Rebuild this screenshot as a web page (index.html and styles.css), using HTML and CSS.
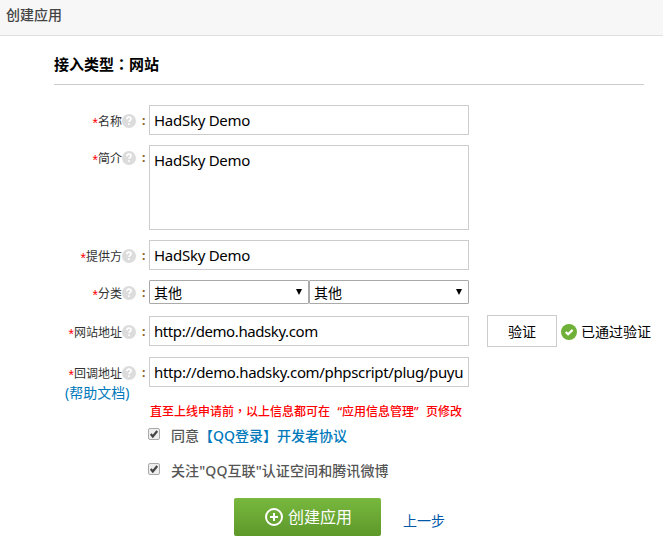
FILE: index.html
```html
<!DOCTYPE html>
<html lang="zh-CN">
<head>
<meta charset="utf-8">
<title>创建应用</title>
<link rel="stylesheet" href="styles.css">
</head>
<body>
<svg class="defs" width="0" height="0">
  <symbol id="help" viewBox="0 0 14 14"><circle cx="7" cy="7" r="7" fill="#dcdcdc"/><path d="M5 5.2C5 3.6 6 3.2 7 3.2S9 3.8 9 5C9 6.4 7 6.4 7 8.1M7 9.3v1.7" fill="none" stroke="#fff" stroke-width="1.7"/></symbol>
  <symbol id="tick" viewBox="0 0 13 13"><path d="M3 6.5l2.2 2.6L10 3.3" fill="none" stroke="#444" stroke-width="2.4"/></symbol>
</svg>
<header class="top">创建应用</header>
<main class="main">
  <h2 class="section">接入类型<span class="mid" lang="zh-TW">：</span>网站</h2>
  <div class="row name">
    <div class="label"><b>*</b><span>名称</span><svg><use href="#help"/></svg><i>:</i></div>
    <div class="field">HadSky Demo</div>
  </div>
  <div class="row intro">
    <div class="label"><b>*</b><span>简介</span><svg><use href="#help"/></svg><i>:</i></div>
    <div class="field area">HadSky Demo</div>
  </div>
  <div class="row vendor">
    <div class="label"><b>*</b><span>提供方</span><svg><use href="#help"/></svg><i>:</i></div>
    <div class="field">HadSky Demo</div>
  </div>
  <div class="row category">
    <div class="label"><b>*</b><span>分类</span><svg><use href="#help"/></svg><i>:</i></div>
    <div class="select"><span>其他</span><em></em></div><div class="select"><span>其他</span><em></em></div>
  </div>
  <div class="row site">
    <div class="label"><b>*</b><span>网站地址</span><svg><use href="#help"/></svg><i>:</i></div>
    <div class="field url">http://demo.hadsky.com</div>
    <div class="verify">验证</div>
    <svg class="ok" viewBox="0 0 16 16"><circle cx="8" cy="8" r="8" fill="#6fb038"/><path d="M4.7 8l2.4 2.3 4.5-4.4" fill="none" stroke="#fff" stroke-width="2.2"/></svg>
    <span class="passed">已通过验证</span>
  </div>
  <div class="row callback">
    <div class="label"><b>*</b><span>回调地址</span><svg><use href="#help"/></svg><i>:</i></div>
    <div class="field url long">http://demo.hadsky.com/phpscript/plug/puyu</div>
  </div>
  <a class="doc">(帮助文档)</a>
  <p class="notice">直至上线申请前<span class="mid" lang="zh-TW">，</span>以上信息都可在<q>“</q>应用信息管理<q class="close">”</q>页修改</p>
  <div class="check"><span class="box"><svg><use href="#tick"/></svg></span><span>同意<a>【QQ登录】开发者协议</a></span></div>
  <div class="check follow"><span class="box"><svg><use href="#tick"/></svg></span><span>关注"QQ互联"认证空间和腾讯微博</span></div>
  <div class="actions">
    <div class="create"><svg viewBox="0 0 18 18"><circle cx="9" cy="9" r="8" fill="none" stroke="#fff" stroke-width="2"/><path d="M9 5v8M5 9h8" stroke="#fff" stroke-width="2"/></svg>创建应用</div>
    <a class="back">上一步</a>
  </div>
</main>
</body>
</html>
```
FILE: styles.css
```css
* { box-sizing: border-box; }
body {
  margin: 0;
  width: 663px;
  height: 556px;
  overflow: hidden;
  background: #fff;
  color: #000;
  font: 14px/20px "Noto Sans", "Noto Sans CJK SC", sans-serif;
}
.defs { display: block; }
.top {
  height: 36px;
  padding: 4px 6px;
  background: #f7f7f7;
  border-bottom: 1px solid #e0e0e0;
  color: #444;
  font-weight: 500;
  font-family: "Noto Sans CJK SC", sans-serif;
}
.section {
  width: 590px;
  height: 49px;
  margin: 0 0 20px 54px;
  padding-top: 18px;
  border-bottom: 1px solid #ccc;
  font: bold 15px/20px "Noto Sans CJK SC", sans-serif;
}
.mid { font-family: "Noto Sans CJK TC", sans-serif; }
.row { display: flex; align-items: flex-start; white-space: nowrap; }
.label {
  display: flex;
  align-items: center;
  justify-content: flex-end;
  width: 149px;
  height: 20px;
  margin-top: 6px;
  padding-right: 4px;
  color: #333;
  font: 12px/20px "Noto Sans CJK SC", sans-serif;
}
.label b { color: #f00; font: 400 14px/20px "Liberation Sans"; padding-top: 3px; }
.label svg { width: 14px; height: 14px; flex: none; }
.label i { width: 3px; margin-left: 6px; color: #865c28; font: bold 12px/18px "Noto Sans"; }
.field {
  width: 320px;
  height: 30px;
  padding: 0 4px;
  border: 1px solid #ccc;
  font: 15px/29px "Noto Sans", sans-serif;
  letter-spacing: -0.27px;
}
.url { letter-spacing: -0.41px; }
.long { letter-spacing: -0.34px; }
.name { height: 40px; }
.intro { height: 95px; }
.intro .label { margin-top: 3px; }
.area { height: 85px; }
.vendor { height: 40px; }
.category { height: 36px; }
.category .label { margin-top: 3px; }
.select {
  display: flex;
  align-items: center;
  justify-content: space-between;
  width: 160px;
  height: 24px;
  padding: 1px 6px 0 4px;
  border: 1px solid #a9a9a9;
  border-radius: 1px;
}
.select em { margin-top: -2px; border: 3px solid transparent; border-top: 6px solid #000; border-bottom: 0; }
.site { height: 41px; }
.verify {
  width: 70px;
  height: 32px;
  margin: -1px 0 0 18px;
  border: 1px solid #ccc;
  line-height: 31px;
  text-align: center;
}
.ok { width: 16px; height: 16px; margin: 8px 4px 0; }
.passed { margin-top: 6px; }
.callback { height: 27px; }
.doc { display: block; width: 66px; height: 18px; margin-left: 65px; line-height: 18px; color: #0079bb; white-space: nowrap; }
.notice {
  height: 18px;
  margin: 0 0 0 150px;
  color: #f00;
  font: 500 12px/18px "Noto Sans CJK SC", sans-serif;
}
.notice q { display: inline-block; width: 12px; quotes: none; text-align: right; font-family: "Noto Sans"; }
.notice q::before, .notice q::after { content: none; }
.notice .close { text-align: left; }
.check { display: flex; height: 35px; margin-left: 148px; padding-top: 6px; color: #555; font-weight: 500; font-family: "Noto Sans", "Noto Sans CJK SC"; }
.check a { color: #0079bb; }
.follow { letter-spacing: 0.1px; }
.box {
  width: 12px;
  height: 12px;
  margin: 2px 11px 0 0;
  border: 1px solid #aaa;
  border-radius: 2px;
  background: #eee;
}
.box svg { display: block; width: 12px; height: 12px; margin: -1px; }
.actions { display: flex; margin: 8px 0 0 234px; }
.create {
  display: flex;
  align-items: center;
  width: 147px;
  height: 38px;
  padding-left: 31px;
  border-radius: 2px;
  background: linear-gradient(#78b83e, #5d982a);
  color: #fff;
  font-size: 16px;
}
.create svg { width: 18px; height: 18px; margin-right: 5px; }
.back { margin: 13px 0 0 22px; color: #0057a8; }
```
